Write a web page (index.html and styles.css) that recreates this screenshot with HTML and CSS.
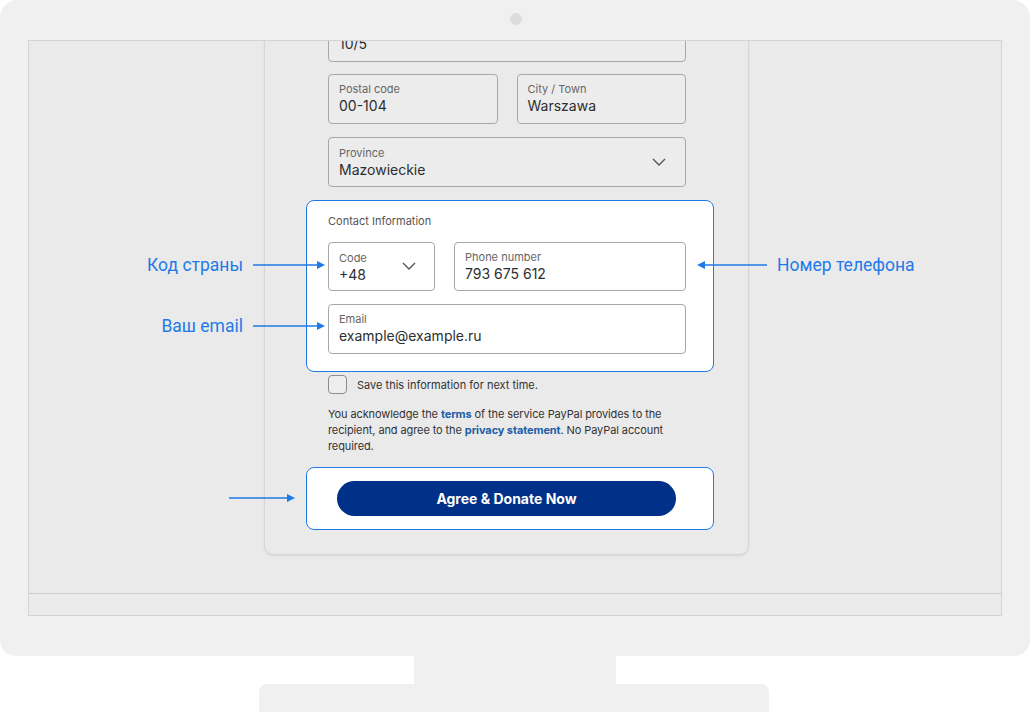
FILE: index.html
```html
<!DOCTYPE html>
<html lang="ru">
<head>
<meta charset="utf-8">
<title>PayPal Donate</title>
<link rel="stylesheet" href="styles.css">
</head>
<body>
<div class="monitor">
	<div class="bezel"><span class="camera"></span></div>
	<div class="screen">
		<div class="viewport">
			<div class="card">
				<div class="field street">
					<span class="value">10/5</span>
				</div>
				<div class="row">
					<div class="field half">
						<span class="label">Postal code</span>
						<span class="value">00-104</span>
					</div>
					<div class="field half">
						<span class="label">City / Town</span>
						<span class="value">Warszawa</span>
					</div>
				</div>
				<div class="field select">
					<div class="text">
						<span class="label">Province</span>
						<span class="value">Mazowieckie</span>
					</div>
					<svg class="chevron" width="14" height="8" viewBox="0 0 14 8"><path d="M1 1l6 6 6-6" fill="none" stroke="#555" stroke-width="1.4"/></svg>
				</div>
				<div class="highlight contact">
					<div class="section">Contact Information</div>
					<div class="row">
						<div class="field select code">
							<div class="text">
								<span class="label">Code</span>
								<span class="value">+48</span>
							</div>
							<svg class="chevron" width="14" height="8" viewBox="0 0 14 8"><path d="M1 1l6 6 6-6" fill="none" stroke="#555" stroke-width="1.4"/></svg>
						</div>
						<div class="field phone">
							<span class="label">Phone number</span>
							<span class="value">793 675 612</span>
						</div>
					</div>
					<div class="field">
						<span class="label">Email</span>
						<span class="value">example@example.ru</span>
					</div>
				</div>
				<label class="save"><span class="box"></span>Save this information for next time.</label>
				<p class="legal">You acknowledge the <a href="#">terms</a> of the service PayPal provides to the recipient, and agree to the <a href="#">privacy statement</a>. No PayPal account required.</p>
				<div class="highlight submit">
					<button class="donate">Agree &amp; Donate Now</button>
				</div>
			</div>

			<div class="note left n-code">Код страны
				<svg width="72" height="10" viewBox="0 0 72 10"><path d="M0 5h65" stroke="#1f7ae8" stroke-width="1.5"/><path d="M64 1l8 4-8 4z" fill="#1f7ae8"/></svg>
			</div>
			<div class="note left n-mail">Ваш email
				<svg width="72" height="10" viewBox="0 0 72 10"><path d="M0 5h65" stroke="#1f7ae8" stroke-width="1.5"/><path d="M64 1l8 4-8 4z" fill="#1f7ae8"/></svg>
			</div>
			<div class="note n-phone">
				<svg width="70" height="10" viewBox="0 0 70 10"><path d="M7 5h63" stroke="#1f7ae8" stroke-width="1.5"/><path d="M8 1l-8 4 8 4z" fill="#1f7ae8"/></svg>
				Номер телефона
			</div>
			<div class="note n-btn">
				<svg width="66" height="10" viewBox="0 0 66 10"><path d="M0 5h59" stroke="#1f7ae8" stroke-width="1.5"/><path d="M58 1l8 4-8 4z" fill="#1f7ae8"/></svg>
			</div>
		</div>
		<div class="statusbar"></div>
	</div>
</div>
<div class="neck"></div>
<div class="base"></div>
</body>
</html>
```

FILE: styles.css
```css
html, body
{
	margin:0;
	padding:0;
	background:#fff;
	overflow:hidden;
}
body
{
	width:1030px;
	height:712px;
	font-family:Inter, "Liberation Sans", sans-serif;
}
.monitor
{
	width:1030px;
	height:656px;
	box-sizing:border-box;
	padding:0 28px;
	background:#f0f0f0;
	border-radius:18px 18px 16px 16px;
}
.bezel
{
	height:40px;
	display:flex;
	align-items:center;
	justify-content:center;
	padding-left:1px;
}
.camera
{
	width:12px;
	height:12px;
	margin-top:-3px;
	border-radius:50%;
	background:#dcdcdc;
}
.screen
{
	height:576px;
	box-sizing:border-box;
	border:1px solid #d3d3d3;
	background:#eaeaea;
	display:flex;
	flex-direction:column;
}
.viewport
{
	position:relative;
	flex:1;
	overflow:hidden;
}
.statusbar
{
	height:21px;
	border-top:1px solid #cdcdcd;
	background:#ebebeb;
}
.neck
{
	width:202px;
	height:28px;
	margin-left:414px;
	background:#f0f0f0;
}
.base
{
	width:510px;
	height:40px;
	margin-left:259px;
	background:#f0f0f0;
	border-radius:8px;
}

/* form card */
.card
{
	width:485px;
	box-sizing:border-box;
	margin:-51px 0 0 235px;
	padding:21px 62px 24px 63px;
	border:1px solid #d6d6d6;
	border-radius:9px;
	background:#eaeaea;
	box-shadow:0 1px 2px rgba(0,0,0,0.08);
	display:flex;
	flex-direction:column;
	gap:12px;
}
.row
{
	display:flex;
	gap:19px;
}
.field
{
	height:50px;
	box-sizing:border-box;
	padding:7px 10px 0 10px;
	border:1px solid #a7a7a7;
	border-radius:4px;
	background:#ececec;
	display:flex;
	flex-direction:column;
}
.street
{
	padding-top:21px;
}
.half
{
	flex:1;
}
.label
{
	font-size:11px;
	line-height:14px;
	color:#666;
}
.value
{
	font-size:14px;
	line-height:20px;
	color:#2c2e2f;
}
.select
{
	flex-direction:row;
	align-items:center;
	justify-content:space-between;
	padding:0 19px 0 10px;
}
.select .text
{
	display:flex;
	flex-direction:column;
	padding-top:2px;
}
.chevron
{
	margin-top:-1px;
}
.card > .select
{
	margin-top:1px;
}
.highlight
{
	background:#fff;
	border:1px solid #1f7ae8;
	border-radius:8px;
}
.contact
{
	margin:1px -28px 0 -22px;
	padding:13px 27px 17px 21px;
	display:flex;
	flex-direction:column;
	gap:13px;
}
.section
{
	font-size:11px;
	line-height:14px;
	color:#555;
}
.contact .field
{
	background:#fff;
	height:50px;
}
.contact .row
{
	margin-top:1px;
}
.code
{
	width:107px;
	padding-right:18px;
}
.phone
{
	flex:1;
}
.contact .row .field
{
	height:49px;
}
.save
{
	margin-top:-9px;
	display:flex;
	align-items:center;
	gap:10px;
	font-size:11px;
	color:#333;
}
.box
{
	width:17px;
	height:17px;
	border:1px solid #8c8c8c;
	border-radius:4px;
	background:#eee;
}
.legal
{
	margin:0;
	font-size:11px;
	line-height:16px;
	color:#333;
	letter-spacing:-0.1px;
}
.legal a
{
	color:#1b5fa8;
	font-weight:700;
	text-decoration:none;
}
.submit
{
	margin:1px -28px 0 -22px;
	padding:13px 37px 13px 30px;
}
.donate
{
	width:100%;
	height:35px;
	border:0;
	border-radius:18px;
	background:#003087;
	color:#fff;
	font-family:Inter, "Liberation Sans", sans-serif;
	font-size:14px;
	font-weight:700;
}

/* annotations */
.note
{
	position:absolute;
	height:22px;
	display:flex;
	align-items:center;
	gap:10px;
	font-family:Roboto, "Liberation Sans", sans-serif;
	font-size:17.5px;
	color:#1f7ae8;
	white-space:nowrap;
}
.note.left
{
	right:676px;
}
.n-code
{
	top:213px;
}
.n-mail
{
	top:274px;
}
.n-phone
{
	top:213px;
	left:668px;
}
.n-btn
{
	top:446px;
	left:200px;
}
```
